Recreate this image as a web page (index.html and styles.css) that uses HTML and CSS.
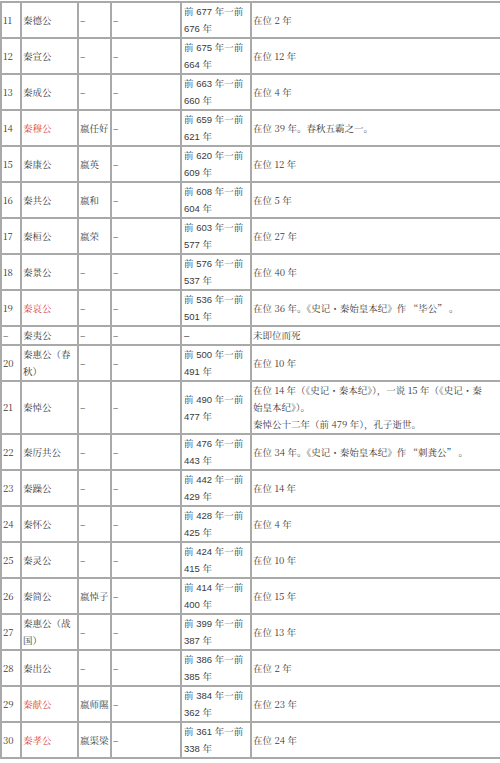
FILE: index.html
```html
<!DOCTYPE html>
<html lang="zh-CN">
<head>
<meta charset="utf-8">
<title>秦国君主列表</title>
<link rel="stylesheet" href="styles.css">
</head>
<body>
<table class="kings">
<colgroup>
<col class="c-no"><col class="c-name"><col class="c-given"><col class="c-blank"><col class="c-years"><col class="c-note">
</colgroup>
<tbody>
<tr><td>11</td><td>秦德公</td><td>–</td><td>–</td><td class="yr">前 677 年一前 676 年</td><td>在位 2 年</td></tr>
<tr><td>12</td><td>秦宣公</td><td>–</td><td>–</td><td class="yr">前 675 年一前 664 年</td><td>在位 12 年</td></tr>
<tr><td>13</td><td>秦成公</td><td>–</td><td>–</td><td class="yr">前 663 年一前 660 年</td><td>在位 4 年</td></tr>
<tr><td>14</td><td class="red">秦穆公</td><td>嬴任好</td><td>–</td><td class="yr">前 659 年一前 621 年</td><td>在位 39 年。春秋五霸之一。</td></tr>
<tr><td>15</td><td>秦康公</td><td>嬴英</td><td>–</td><td class="yr">前 620 年一前 609 年</td><td>在位 12 年</td></tr>
<tr><td>16</td><td>秦共公</td><td>嬴和</td><td>–</td><td class="yr">前 608 年一前 604 年</td><td>在位 5 年</td></tr>
<tr><td>17</td><td>秦桓公</td><td>嬴荣</td><td>–</td><td class="yr">前 603 年一前 577 年</td><td>在位 27 年</td></tr>
<tr><td>18</td><td>秦景公</td><td>–</td><td>–</td><td class="yr">前 576 年一前 537 年</td><td>在位 40 年</td></tr>
<tr><td>19</td><td class="red">秦哀公</td><td>–</td><td>–</td><td class="yr">前 536 年一前 501 年</td><td>在位 36 年。《史记・秦始皇本纪》作 “毕公” 。</td></tr>
<tr><td>–</td><td>秦夷公</td><td>–</td><td>–</td><td class="yr">–</td><td>未即位而死</td></tr>
<tr><td>20</td><td>秦惠公（春秋）</td><td>–</td><td>–</td><td class="yr">前 500 年一前 491 年</td><td>在位 10 年</td></tr>
<tr><td>21</td><td>秦悼公</td><td>–</td><td>–</td><td class="yr">前 490 年一前 477 年</td><td><span class="line">在位 14 年（《史记・秦本纪》），一说 15 年（《史记・秦</span><br><span class="line">始皇本纪》）。</span><br><span class="line">秦悼公十二年（前 479 年），孔子逝世。</span></td></tr>
<tr><td>22</td><td>秦厉共公</td><td>–</td><td>–</td><td class="yr">前 476 年一前 443 年</td><td>在位 34 年。《史记・秦始皇本纪》作 “刺龚公” 。</td></tr>
<tr><td>23</td><td>秦躁公</td><td>–</td><td>–</td><td class="yr">前 442 年一前 429 年</td><td>在位 14 年</td></tr>
<tr><td>24</td><td>秦怀公</td><td>–</td><td>–</td><td class="yr">前 428 年一前 425 年</td><td>在位 4 年</td></tr>
<tr><td>25</td><td>秦灵公</td><td>–</td><td>–</td><td class="yr">前 424 年一前 415 年</td><td>在位 10 年</td></tr>
<tr><td>26</td><td>秦简公</td><td>嬴悼子</td><td>–</td><td class="yr">前 414 年一前 400 年</td><td>在位 15 年</td></tr>
<tr><td>27</td><td>秦惠公（战国）</td><td>–</td><td>–</td><td class="yr">前 399 年一前 387 年</td><td>在位 13 年</td></tr>
<tr><td>28</td><td>秦出公</td><td>–</td><td>–</td><td class="yr">前 386 年一前 385 年</td><td>在位 2 年</td></tr>
<tr><td>29</td><td class="red">秦献公</td><td>嬴师隰</td><td>–</td><td class="yr">前 384 年一前 362 年</td><td>在位 23 年</td></tr>
<tr><td>30</td><td class="red">秦孝公</td><td>嬴渠梁</td><td>–</td><td class="yr">前 361 年一前 338 年</td><td>在位 24 年</td></tr>
</tbody>
</table>
</body>
</html>
```

FILE: styles.css
```css
html, body {
  margin: 0;
  padding: 0;
  background: #ffffff;
}

body {
  padding-top: 1px;
  font-family: "Noto Serif CJK SC", "Liberation Serif", "Noto Sans CJK SC", serif;
  font-size: 9.5px;
  color: #3a3a3a;
}

.kings {
  table-layout: fixed;
  border-collapse: collapse;
  width: 500px;
}

.c-no { width: 20px; }
.c-name { width: 57px; }
.c-given { width: 33px; }
.c-blank { width: 70px; }
.c-years { width: 70px; }
.c-note { width: 250px; }

.kings td {
  border: 2px solid #a9a9a9;
  padding: 0 0 0 1px;
  line-height: 17px;
  vertical-align: middle;
  text-align: left;
  overflow: hidden;
}

.kings td.yr {
  padding-left: 2px;
  font-family: "Liberation Sans", "Noto Serif CJK SC", "Noto Sans CJK SC", sans-serif;
}

.kings td.red {
  color: #d94848;
}

.line {
  white-space: nowrap;
}
```
